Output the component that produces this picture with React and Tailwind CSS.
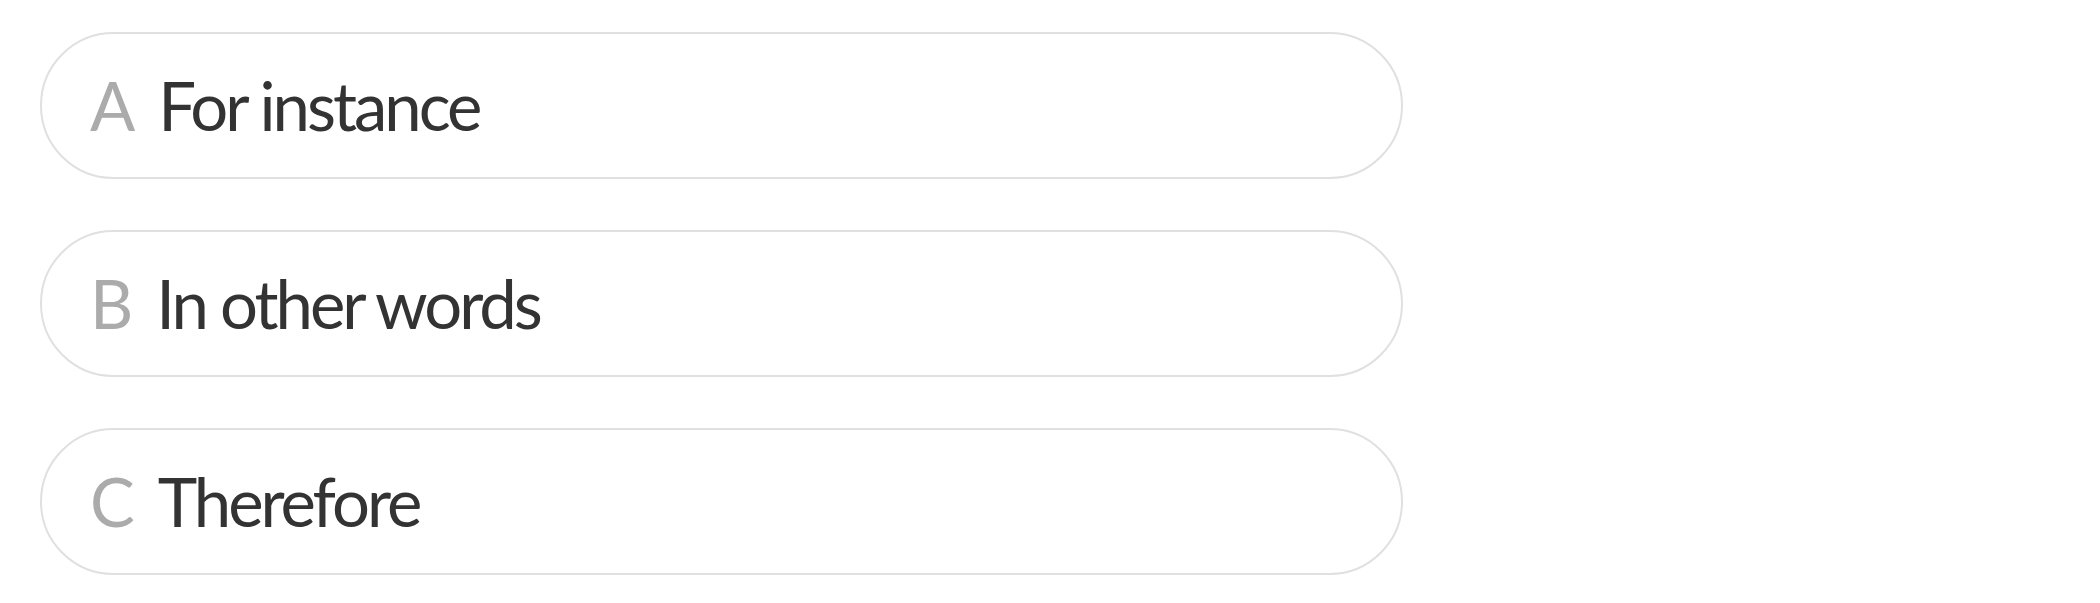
import React from 'react';

const options = [
  { key: 'A', text: 'For instance' },
  { key: 'B', text: 'In other words' },
  { key: 'C', text: 'Therefore' },
];

export default function App() {
  return (
    <div className="min-h-screen bg-white pt-[32px] pl-[40px]" style={{ fontFamily: 'Lato, "Open Sans", sans-serif' }}>
      <div className="flex flex-col gap-[51px] w-[1363px]">
        {options.map((opt) => (
          <div
            key={opt.key}
            className="h-[147px] rounded-full border-2 border-[#e0e0e0] flex items-center pl-[48px] gap-[23px]"
          >
            <span className="text-[67px] leading-none text-[#ababab]">{opt.key}</span>
            <span className="text-[67px] leading-none tracking-[-3px] text-[#333333]">{opt.text}</span>
          </div>
        ))}
      </div>
    </div>
  );
}
